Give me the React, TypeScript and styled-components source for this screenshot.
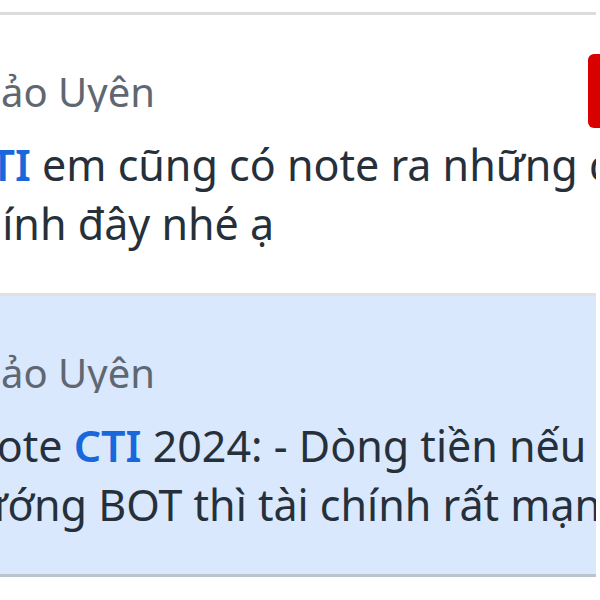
import type { ReactNode } from 'react'
import styled, { createGlobalStyle } from 'styled-components'

const Global = createGlobalStyle`
  html, body {
    margin: 0;
    padding: 0;
    background: #ffffff;
    overflow: hidden;
  }
  body {
    font-family: "Noto Sans", "Open Sans", sans-serif;
  }
`

const Page = styled.div`
  position: relative;
  width: 600px;
  height: 600px;
  overflow: hidden;
  background: #ffffff;
  padding-top: 12px;
  box-sizing: border-box;
`

const List = styled.div`
  width: 596px;
  border-top: 3px solid #dcdcdc;
  display: flex;
  flex-direction: column;
`

const Item = styled.div<{ $active?: boolean }>`
  display: flex;
  flex-direction: column;
  gap: 23px;
  padding: 57px 0 40px;
  background: ${(p) => (p.$active ? '#d9e8fc' : '#ffffff')};
  border-bottom: 3px solid ${(p) => (p.$active ? '#b9c4ce' : '#e5e0e0')};
`

const Name = styled.div<{ $shift: number }>`
  font-size: 40px;
  line-height: 40px;
  color: #5f6772;
  white-space: nowrap;
  overflow: hidden;
  text-indent: ${(p) => -p.$shift}px;
`

const Body = styled.div`
  display: flex;
  flex-direction: column;
`

const Line = styled.div<{ $shift: number }>`
  font-size: 43px;
  line-height: 59px;
  color: #26303b;
  white-space: nowrap;
  overflow: hidden;
  text-indent: ${(p) => -p.$shift}px;
`

const Tag = styled.span`
  color: #1868dc;
  font-weight: 600;
`

const Badge = styled.div`
  position: absolute;
  left: 588px;
  top: 54px;
  width: 20px;
  height: 74px;
  border-radius: 6px;
  background: #d90000;
`

type Msg = {
  name: string
  nameShift: number
  lines: { text: ReactNode; shift: number }[]
  active?: boolean
}

const messages: Msg[] = [
  {
    name: 'Bảo Uyên',
    nameShift: 25,
    lines: [
      {
        text: (
          <>
            <Tag>CTI</Tag> em cũng có note ra những chỉ số
          </>
        ),
        shift: 37,
      },
      { text: 'chính đây nhé ạ', shift: 45 },
    ],
  },
  {
    name: 'Bảo Uyên',
    nameShift: 25,
    active: true,
    lines: [
      {
        text: (
          <>
            Note <Tag>CTI</Tag> 2024: - Dòng tiền nếu
          </>
        ),
        shift: 36,
      },
      { text: 'hướng BOT thì tài chính rất mạnh', shift: 48 },
    ],
  },
]

function App() {
  return (
    <>
      <Global />
      <Page>
        <List>
          {messages.map((m, i) => (
            <Item key={i} $active={m.active}>
              <Name $shift={m.nameShift}>{m.name}</Name>
              <Body>
                {m.lines.map((l, j) => (
                  <Line key={j} $shift={l.shift}>
                    {l.text}
                  </Line>
                ))}
              </Body>
            </Item>
          ))}
        </List>
        <Badge />
      </Page>
    </>
  )
}

export default App
